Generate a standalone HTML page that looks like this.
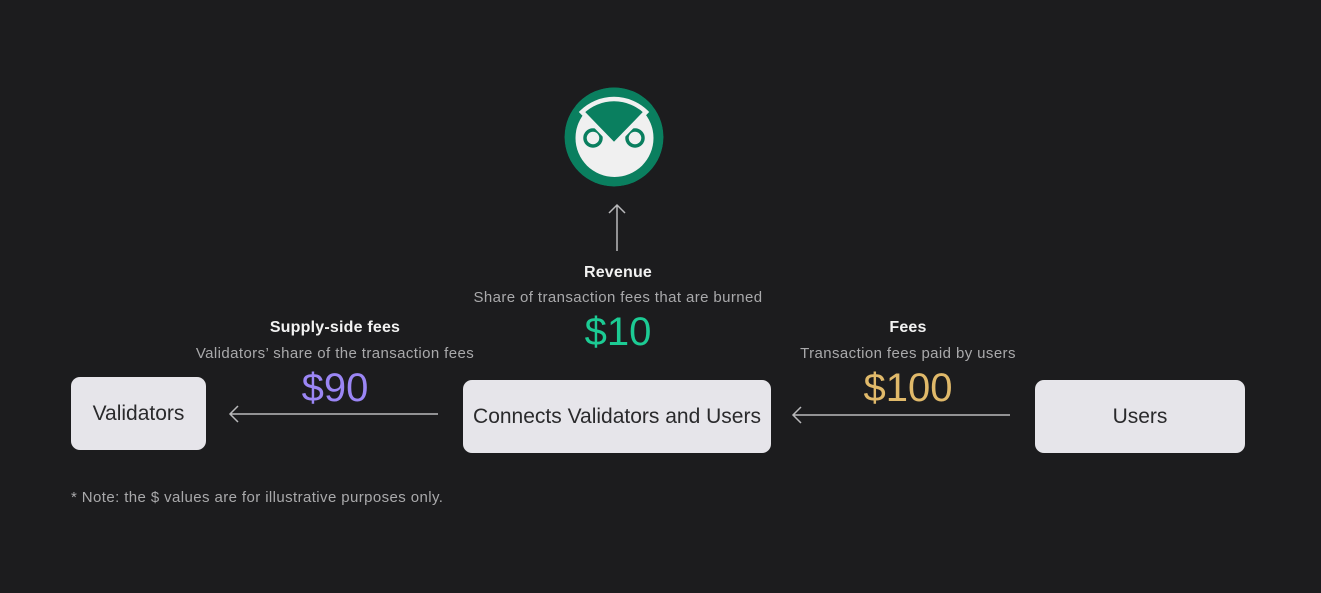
<!DOCTYPE html>
<html><head><style>
body{margin:0;width:1321px;height:593px;background:#1c1c1e;font-family:"Liberation Sans",sans-serif;position:relative;overflow:hidden}
.a{position:absolute;text-align:center;white-space:nowrap}
.t{font-size:16px;font-weight:bold;color:#f2f2f2;width:400px;letter-spacing:0.2px}
.s{font-size:15px;color:#a9a9ab;width:400px;letter-spacing:0.4px}
.v{font-size:40px;width:400px;line-height:40px}
.b{position:absolute;background:#e6e5ea;border-radius:9px;display:flex;align-items:center;justify-content:center;font-size:21px;color:#2a2a2c}
</style></head><body>
<svg style="position:absolute;left:564px;top:87px" width="100" height="100" viewBox="0 0 100 100">
<defs><clipPath id="c"><circle cx="50" cy="50" r="49.5"/></clipPath></defs>
<g clip-path="url(#c)">
<circle cx="50" cy="50" r="49.5" fill="#0a7f5f"/>
<circle cx="50.5" cy="51" r="39" fill="#f0f0f0"/>
<circle cx="29" cy="51" r="8" fill="#f0f0f0" stroke="#0a7f5f" stroke-width="3.5"/>
<circle cx="71" cy="51" r="8" fill="#f0f0f0" stroke="#0a7f5f" stroke-width="3.5"/>
<path d="M50 58 L0 6.4 L0 0 L100 0 L100 6.4 Z" fill="#0a7f5f"/>
<path d="M50 58 L18 25 A46 46 0 0 1 82 25 Z" fill="#0a7f5f" stroke="#f0f0f0" stroke-width="4.5" stroke-linejoin="miter"/>
</g>
</svg>
<svg style="position:absolute;left:0;top:0" width="1321" height="593">
<g stroke="#b9b9bb" stroke-width="1.5" fill="none">
<path d="M617 251V205M609 213L617 205L625 213"/>
<path d="M438 414H230M238 406L230 414L238 422"/>
<path d="M1010 415H793M801 407L793 415L801 423"/>
</g></svg>
<div class="a t" style="left:418px;top:264px">Revenue</div>
<div class="a s" style="left:418px;top:289px">Share of transaction fees that are burned</div>
<div class="a v" style="left:418px;top:312px;color:#1ccb94">$10</div>
<div class="a t" style="left:135px;top:319px">Supply-side fees</div>
<div class="a s" style="left:135px;top:345px">Validators’ share of the transaction fees</div>
<div class="a v" style="left:135px;top:368px;color:#9b86f5">$90</div>
<div class="a t" style="left:708px;top:319px">Fees</div>
<div class="a s" style="left:708px;top:345px">Transaction fees paid by users</div>
<div class="a v" style="left:708px;top:368px;color:#e0b96a">$100</div>
<div class="b" style="left:71px;top:377px;width:135px;height:73px">Validators</div>
<div class="b" style="left:463px;top:380px;width:308px;height:73px">Connects Validators and Users</div>
<div class="b" style="left:1035px;top:380px;width:210px;height:73px">Users</div>
<div class="a" style="left:71px;top:489px;font-size:15px;letter-spacing:0.4px;color:#a9a9ab">* Note: the $ values are for illustrative purposes only.</div>
</body></html>
